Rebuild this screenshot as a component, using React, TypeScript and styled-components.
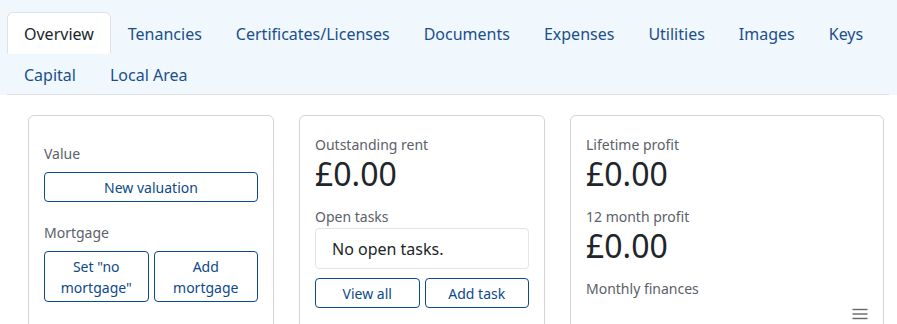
import React from "react";
import styled, { createGlobalStyle } from "styled-components";

const GlobalStyle = createGlobalStyle`
  body {
    margin: 0;
    font-family: "Noto Sans", "Open Sans", sans-serif;
    color: #212529;
    background: #ffffff;
  }
  * { box-sizing: border-box; }
`;

const TabBar = styled.div`
  background-color: #f0f7fd;
  padding: 12px 8px 0 7px;
`;

const TabList = styled.ul`
  display: flex;
  flex-wrap: wrap;
  list-style: none;
  margin: 0;
  padding: 0;
  border-bottom: 1px solid #dee2e6;
`;

const Tab = styled.li<{ $active?: boolean }>`
  margin-bottom: -1px;
  padding: 9px 16px 7px 16px;
  font-size: 16px;
  line-height: 24px;
  border: 1px solid ${(p) => (p.$active ? "#dee2e6" : "transparent")};
  border-bottom-color: ${(p) => (p.$active ? "#ffffff" : "transparent")};
  border-radius: 6px 6px 0 0;
  background: ${(p) => (p.$active ? "#ffffff" : "transparent")};
  color: ${(p) => (p.$active ? "#212529" : "#1b4f8c")};
  cursor: pointer;
`;

const CardGrid = styled.div`
  display: grid;
  grid-template-columns: 246px 246px 1fr;
  gap: 25px;
  padding: 20px 13px 0 28px;
`;

const Card = styled.div<{ $top?: number }>`
  border: 1px solid #d4d4d4;
  border-radius: 6px;
  padding: ${(p) => p.$top ?? 19}px 15px 16px 15px;
  min-height: 230px;
`;

const Label = styled.div<{ $gap?: number }>`
  font-size: 14px;
  line-height: 19px;
  color: #5b6169;
  margin-bottom: ${(p) => p.$gap ?? 0}px;
`;

const Amount = styled.div`
  font-size: 32px;
  line-height: 39px;
  color: #212529;
  margin-bottom: 14px;
`;

const Section = styled.div`
  margin-bottom: 21px;
`;

const ButtonRow = styled.div`
  display: grid;
  grid-template-columns: 1fr 1fr;
  gap: 5px;
`;

const OutlineButton = styled.button`
  width: 100%;
  font-family: inherit;
  font-size: 14px;
  line-height: 21px;
  padding: 4px 8px 3px 8px;
  background: #ffffff;
  color: #0c4a8a;
  border: 1.5px solid #0c4a8a;
  border-radius: 4px;
  cursor: pointer;
`;

const TaskBox = styled.div`
  border: 1px solid #e2e4e7;
  border-radius: 4px;
  padding: 8px 16px 7px 16px;
  font-size: 16px;
  line-height: 24px;
  color: #212529;
  margin: 2px 0 9px 0;
`;

const ChartHead = styled.div`
  display: flex;
  justify-content: flex-end;
  padding: 10px 0 0 0;
`;

const MenuIcon = () => (
  <svg width="16" height="12" viewBox="0 0 16 12">
    <g stroke="#666666" strokeWidth="1.4">
      <line x1="0.5" y1="1.5" x2="15.5" y2="1.5" />
      <line x1="0.5" y1="6" x2="15.5" y2="6" />
      <line x1="0.5" y1="10.5" x2="15.5" y2="10.5" />
    </g>
  </svg>
);

const tabs = [
  "Overview",
  "Tenancies",
  "Certificates/Licenses",
  "Documents",
  "Expenses",
  "Utilities",
  "Images",
  "Keys",
  "Capital",
  "Local Area",
];

const App = () => {
  return (
    <>
      <GlobalStyle />
      <TabBar>
        <TabList>
          {tabs.map((t, i) => (
            <Tab key={t} $active={i === 0}>
              {t}
            </Tab>
          ))}
        </TabList>
      </TabBar>
      <CardGrid>
        <Card $top={28}>
          <Section>
            <Label $gap={9}>Value</Label>
            <OutlineButton>New valuation</OutlineButton>
          </Section>
          <Label $gap={9}>Mortgage</Label>
          <ButtonRow>
            <OutlineButton>Set "no mortgage"</OutlineButton>
            <OutlineButton>Add mortgage</OutlineButton>
          </ButtonRow>
        </Card>
        <Card>
          <Label>Outstanding rent</Label>
          <Amount>£0.00</Amount>
          <Label>Open tasks</Label>
          <TaskBox>No open tasks.</TaskBox>
          <ButtonRow>
            <OutlineButton>View all</OutlineButton>
            <OutlineButton>Add task</OutlineButton>
          </ButtonRow>
        </Card>
        <Card>
          <Label>Lifetime profit</Label>
          <Amount>£0.00</Amount>
          <Label>12 month profit</Label>
          <Amount>£0.00</Amount>
          <Label>Monthly finances</Label>
          <ChartHead>
            <MenuIcon />
          </ChartHead>
        </Card>
      </CardGrid>
    </>
  );
};

export default App;
